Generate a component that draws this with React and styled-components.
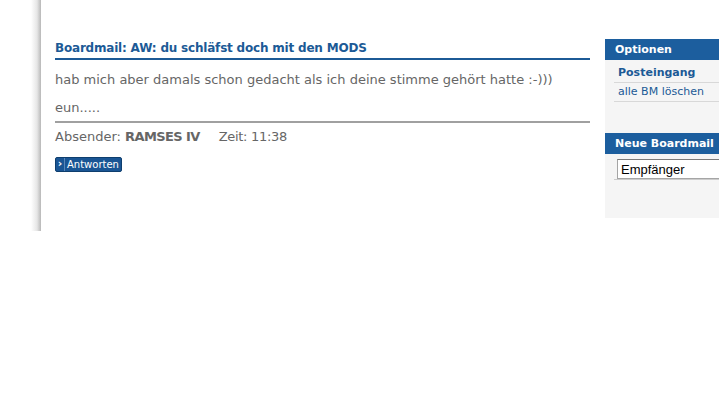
import React from 'react';
import styled, { createGlobalStyle } from 'styled-components';

const GlobalStyle = createGlobalStyle`
  body {
    margin: 0;
    background: #ffffff;
    font-family: "DejaVu Sans", Verdana, sans-serif;
  }
`;

const Page = styled.div`
  display: flex;
  width: 719px;
  height: 404px;
  overflow: hidden;
`;

const Frame = styled.div`
  margin-left: 31px;
  height: 231px;
  flex: 1;
  display: flex;
  background: linear-gradient(to right, #ffffff 0px, #e6e6e6 6px, #b8b8b8 10px, #ffffff 10px);
  padding-left: 24px;
  padding-top: 39px;
  box-sizing: border-box;
  gap: 15px;
`;

const Main = styled.div`
  width: 535px;
  flex-shrink: 0;
`;

const Title = styled.h2`
  margin: 0;
  font-size: 12px;
  letter-spacing: -0.2px;
  font-weight: bold;
  color: #1c5a96;
  line-height: 18px;
  padding-bottom: 1px;
  border-bottom: 2px solid #1c5a96;
`;

const Text = styled.p`
  margin: ${p => p.$top || 0}px 0 0;
  font-size: 13px;
  color: #666666;
  line-height: 16px;
`;

const Meta = styled.div`
  border-top: 2px solid #a0a0a0;
  margin-top: 5px;
  padding-top: 6px;
  font-size: 13px;
  line-height: 16px;
  color: #666666;
  display: flex;
  gap: 19px;
`;

const Strong = styled.b`
  font-weight: bold;
  letter-spacing: -0.6px;
`;

const Time = styled.span`
  letter-spacing: -0.3px;
`;

const Button = styled.button`
  margin-top: 12px;
  display: flex;
  align-items: stretch;
  height: 15px;
  padding: 0;
  border: 1px solid #0e3e6e;
  border-radius: 2px;
  background: #1a5594;
  color: #ffffff;
  font-family: "DejaVu Sans", Verdana, sans-serif;
  font-size: 10px;
  cursor: pointer;
`;

const Arrow = styled.span`
  width: 9px;
  display: flex;
  align-items: center;
  justify-content: center;
  border-right: 1px solid #5a87b8;
  font-weight: bold;
  font-size: 11px;
  line-height: 1;
  padding-bottom: 2px;
  box-sizing: border-box;
`;

const ButtonLabel = styled.span`
  padding: 0 2px 0 2px;
  line-height: 13px;
`;

const Side = styled.div`
  flex: 1;
  min-width: 0;
  height: 179px;
  background: #f5f5f5;
  white-space: nowrap;
  overflow: hidden;
`;

const SideHead = styled.div`
  background: #1c5e9e;
  color: #ffffff;
  font-size: 11px;
  font-weight: bold;
  height: 21px;
  line-height: 21px;
  padding-left: 10px;
  margin-top: ${p => p.$top || 0}px;
`;

const SideList = styled.div`
  padding: 4px 0 0 9px;
`;

const SideItem = styled.div`
  font-size: 11px;
  line-height: 16px;
  padding: 1px 0 1px 4px;
  border-bottom: 1px solid #d8d8d8;
  color: #1c5a96;
  font-weight: ${p => (p.$bold ? 'bold' : 'normal')};
`;

const InputRow = styled.div`
  margin: 5px 0 0 9px;
  border-bottom: 1px solid #cccccc;
  padding-left: 3px;
`;

const Input = styled.input`
  display: block;
  width: 140px;
  height: 20px;
  box-sizing: border-box;
  border: 1px solid #a5a5a5;
  border-top-color: #7a7a7a;
  padding: 0 3px;
  font-family: "Liberation Sans", Arial, sans-serif;
  font-size: 13px;
  color: #000000;
  background: #ffffff;
  &::placeholder {
    color: #000000;
  }
`;

export default function App() {
  return (
    <>
      <GlobalStyle />
      <Page>
        <Frame>
          <Main>
            <Title>Boardmail: AW: du schläfst doch mit den MODS</Title>
            <Text $top={12}>hab mich aber damals schon gedacht als ich deine stimme gehört hatte :-)))</Text>
            <Text $top={12}>eun.....</Text>
            <Meta>
              <span>Absender: <Strong>RAMSES IV</Strong></span>
              <Time>Zeit: 11:38</Time>
            </Meta>
            <Button>
              <Arrow>›</Arrow>
              <ButtonLabel>Antworten</ButtonLabel>
            </Button>
          </Main>
          <Side>
            <SideHead>Optionen</SideHead>
            <SideList>
              <SideItem $bold>Posteingang</SideItem>
              <SideItem>alle BM löschen</SideItem>
            </SideList>
            <SideHead $top={31}>Neue Boardmail</SideHead>
            <InputRow>
              <Input placeholder="Empfänger" />
            </InputRow>
          </Side>
        </Frame>
      </Page>
    </>
  );
}
